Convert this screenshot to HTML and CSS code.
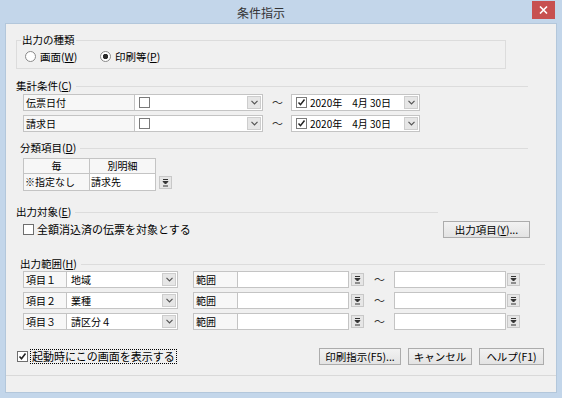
FILE: index.html
```html
<!DOCTYPE html>
<html lang="ja">
<head>
    <meta charset="UTF-8">
    <title>条件指示</title>
    <link rel="stylesheet" href="styles.css">
</head>
<body>
<div class="window">
    <div class="titlebar">
        <div class="title">条件指示</div>
        <div class="close">
            <svg width="9" height="8" viewBox="0 0 9 8"><path d="M1 0.5 L8 7.5 M8 0.5 L1 7.5" stroke="#fff" stroke-width="1.6"/></svg>
        </div>
    </div>

    <div class="client">
        <fieldset class="kind">
            <legend>出力の種類</legend>
            <div class="options">
                <label class="radio first"><span class="dot"></span>画面(<u>W</u>)</label>
                <label class="radio"><span class="dot on"></span>印刷等(<u>P</u>)</label>
            </div>
        </fieldset>

        <!-- 集計条件 -->
        <div class="head head-sum"><span>集計条件(<u>C</u>)</span><span class="rule"></span></div>
        <div class="row cond first">
            <span class="cell w-cond">伝票日付</span>
            <span class="combo w-box">
                <span class="val"><span class="box"></span></span>
                <span class="drop"><svg width="7" height="5" viewBox="0 0 7 5"><path d="M0.5 0.8 L3.5 3.8 L6.5 0.8" fill="none" stroke="#555" stroke-width="1.2"/></svg></span>
            </span>
            <span class="tilde w-tilde">～</span>
            <span class="combo w-box">
                <span class="val"><span class="box"><svg width="9" height="9" viewBox="0 0 9 9"><path d="M1.5 4.5 L3.5 6.7 L7.5 1.5" fill="none" stroke="#222" stroke-width="1.5"/></svg></span>2020年　4月 30日</span>
                <span class="drop"><svg width="7" height="5" viewBox="0 0 7 5"><path d="M0.5 0.8 L3.5 3.8 L6.5 0.8" fill="none" stroke="#555" stroke-width="1.2"/></svg></span>
            </span>
        </div>
        <div class="row cond">
            <span class="cell w-cond">請求日</span>
            <span class="combo w-box">
                <span class="val"><span class="box"></span></span>
                <span class="drop"><svg width="7" height="5" viewBox="0 0 7 5"><path d="M0.5 0.8 L3.5 3.8 L6.5 0.8" fill="none" stroke="#555" stroke-width="1.2"/></svg></span>
            </span>
            <span class="tilde w-tilde">～</span>
            <span class="combo w-box">
                <span class="val"><span class="box"><svg width="9" height="9" viewBox="0 0 9 9"><path d="M1.5 4.5 L3.5 6.7 L7.5 1.5" fill="none" stroke="#222" stroke-width="1.5"/></svg></span>2020年　4月 30日</span>
                <span class="drop"><svg width="7" height="5" viewBox="0 0 7 5"><path d="M0.5 0.8 L3.5 3.8 L6.5 0.8" fill="none" stroke="#555" stroke-width="1.2"/></svg></span>
            </span>
        </div>

        <!-- 分類項目 -->
        <div class="head head-class"><span>分類項目(<u>D</u>)</span><span class="rule"></span></div>
        <div class="class-table">
            <div class="grid">
                <span class="gh">毎</span>
                <span class="gh">別明細</span>
                <span class="gd">※指定なし</span>
                <span class="gd white">請求先</span>
            </div>
            <span class="sbtn"><svg width="7" height="9" viewBox="0 0 7 9"><path d="M1 1.5 H6 M1 3.5 H6 L3.5 6 Z M1 8 H6" fill="#333" stroke="#333" stroke-width="1"/></svg></span>
        </div>

        <!-- 出力対象 -->
        <div class="head head-target"><span>出力対象(<u>E</u>)</span><span class="rule"></span></div>
        <div class="target-row">
            <span class="check"></span>
            <span class="check-text">全額消込済の伝票を対象とする</span>
            <span class="btn w-items">出力項目(<u>Y</u>)...</span>
        </div>

        <!-- 出力範囲 -->
        <div class="head head-range"><span>出力範囲(<u>H</u>)</span><span class="rule"></span></div>
        <div class="row range">
            <span class="cell w-item">項目１</span>
            <span class="combo w-sel">
                <span class="val">地域</span>
                <span class="drop"><svg width="7" height="5" viewBox="0 0 7 5"><path d="M0.5 0.8 L3.5 3.8 L6.5 0.8" fill="none" stroke="#555" stroke-width="1.2"/></svg></span>
            </span>
            <span class="cell w-span">範囲</span>
            <span class="input w-from"></span>
            <span class="sbtn"><svg width="7" height="9" viewBox="0 0 7 9"><path d="M1 1.5 H6 M1 3.5 H6 L3.5 6 Z M1 8 H6" fill="#333" stroke="#333" stroke-width="1"/></svg></span>
            <span class="tilde w-rtilde">～</span>
            <span class="input w-to"></span>
            <span class="sbtn to"><svg width="7" height="9" viewBox="0 0 7 9"><path d="M1 1.5 H6 M1 3.5 H6 L3.5 6 Z M1 8 H6" fill="#333" stroke="#333" stroke-width="1"/></svg></span>
        </div>
        <div class="row range">
            <span class="cell w-item">項目２</span>
            <span class="combo w-sel">
                <span class="val">業種</span>
                <span class="drop"><svg width="7" height="5" viewBox="0 0 7 5"><path d="M0.5 0.8 L3.5 3.8 L6.5 0.8" fill="none" stroke="#555" stroke-width="1.2"/></svg></span>
            </span>
            <span class="cell w-span">範囲</span>
            <span class="input w-from"></span>
            <span class="sbtn"><svg width="7" height="9" viewBox="0 0 7 9"><path d="M1 1.5 H6 M1 3.5 H6 L3.5 6 Z M1 8 H6" fill="#333" stroke="#333" stroke-width="1"/></svg></span>
            <span class="tilde w-rtilde">～</span>
            <span class="input w-to"></span>
            <span class="sbtn to"><svg width="7" height="9" viewBox="0 0 7 9"><path d="M1 1.5 H6 M1 3.5 H6 L3.5 6 Z M1 8 H6" fill="#333" stroke="#333" stroke-width="1"/></svg></span>
        </div>
        <div class="row range">
            <span class="cell w-item">項目３</span>
            <span class="combo w-sel">
                <span class="val">請区分４</span>
                <span class="drop"><svg width="7" height="5" viewBox="0 0 7 5"><path d="M0.5 0.8 L3.5 3.8 L6.5 0.8" fill="none" stroke="#555" stroke-width="1.2"/></svg></span>
            </span>
            <span class="cell w-span">範囲</span>
            <span class="input w-from"></span>
            <span class="sbtn"><svg width="7" height="9" viewBox="0 0 7 9"><path d="M1 1.5 H6 M1 3.5 H6 L3.5 6 Z M1 8 H6" fill="#333" stroke="#333" stroke-width="1"/></svg></span>
            <span class="tilde w-rtilde">～</span>
            <span class="input w-to"></span>
            <span class="sbtn to"><svg width="7" height="9" viewBox="0 0 7 9"><path d="M1 1.5 H6 M1 3.5 H6 L3.5 6 Z M1 8 H6" fill="#333" stroke="#333" stroke-width="1"/></svg></span>
        </div>

        <!-- フッター -->
        <div class="footer">
            <span class="check"><svg width="9" height="9" viewBox="0 0 9 9"><path d="M1.5 4.5 L3.5 6.7 L7.5 1.5" fill="none" stroke="#222" stroke-width="1.6"/></svg></span>
            <span class="check-text focus">起動時にこの画面を表示する</span>
            <span class="btn w-print">印刷指示(F5)...</span>
            <span class="btn w-cancel">キャンセル</span>
            <span class="btn w-help">ヘルプ(F1)</span>
        </div>
        <div class="sep"></div>
    </div>
</div>
</body>
</html>
```

FILE: styles.css
```css
:root {
    --frame-color: #c3d6ea;
    --face-color: #f0f0f0;
    --line-color: #dcdcdc;
    --cell-border: #c4c4c4;
    --text-color: #000000;
}

* {
    box-sizing: border-box;
}

body {
    margin: 0;
    font-family: "Noto Sans CJK JP", "Noto Sans", sans-serif;
    font-size: 10.5px;
    color: var(--text-color);
}

u {
    text-decoration: underline;
    text-underline-offset: 1px;
}

.window {
    width: 562px;
    height: 398px;
    background-color: var(--frame-color);
    display: flex;
    flex-direction: column;
}

.titlebar {
    height: 24px;
    display: flex;
    align-items: flex-start;
    flex-shrink: 0;
}

.title {
    flex: 1;
    text-align: center;
    line-height: 26px;
    font-size: 12px;
    color: #333333;
    padding-right: 10px;
}

.close {
    width: 23px;
    height: 18px;
    margin: 1px 7px 0 0;
    background-color: #c75050;
    display: flex;
    align-items: center;
    justify-content: center;
}

.client {
    flex: 1;
    margin: 0 6px 6px;
    background-color: var(--face-color);
    box-shadow: 0 0 0 1px #b3c7db;
}

/* 出力の種類 */
.kind {
    margin: 9px 0 0 10px;
    width: 490px;
    height: 36px;
    padding: 0 0 0 4px;
    border: 1px solid var(--line-color);
}

.kind legend {
    padding: 0 1px;
    line-height: 14px;
}

.options {
    display: flex;
    align-items: center;
    height: 18px;
}

.radio {
    display: flex;
    align-items: center;
    margin-left: 4px;
}

.radio.first {
    width: 71px;
}

.dot {
    width: 11px;
    height: 11px;
    border-radius: 50%;
    border: 1px solid #8a8a8a;
    background-color: #fff;
    margin-right: 4px;
}

.dot.on {
    background: radial-gradient(circle, #2a2a2a 0 2.4px, #fff 3px);
}

/* 見出し */
.head {
    display: flex;
    align-items: center;
    height: 14px;
    line-height: 14px;
}

.head .rule {
    flex: 1;
    border-top: 1px solid var(--line-color);
    margin-left: 4px;
}

.head-sum {
    margin: 10px 28px 0 10px;
}

.head-class {
    margin: 9px 28px 0 14px;
}

.head-target {
    margin: 14px 118px 0 10px;
}

.head-range {
    margin: 19px 11px 0 14px;
}

/* 行 */
.row {
    display: flex;
    height: 17px;
    margin-top: 4px;
    margin-left: 17px;
}

.row.cond.first {
    margin-top: 1px;
}

.row.range:first-of-type,
.head-range + .row {
    margin-top: 0;
}

.cell {
    border: 1px solid var(--cell-border);
    background-color: #f7f7f7;
    font-size: 10px;
    line-height: 15px;
    padding-left: 2px;
    white-space: nowrap;
}

.combo {
    display: flex;
    border: 1px solid var(--cell-border);
    background-color: #fff;
    margin-left: -1px;
}

.combo .val {
    flex: 1;
    display: flex;
    align-items: center;
    padding-left: 4px;
    font-size: 10px;
    line-height: 15px;
    white-space: nowrap;
}

.drop {
    width: 14px;
    margin: 1px;
    background-color: #e6e6e6;
    border: 1px solid #cdcdcd;
    display: flex;
    align-items: center;
    justify-content: center;
}

.box {
    width: 11px;
    height: 11px;
    border: 1px solid #7a7a7a;
    background-color: #fff;
    display: flex;
    align-items: center;
    justify-content: center;
    margin-right: 3px;
}

.tilde {
    text-align: center;
    font-size: 11px;
    line-height: 17px;
    color: #333;
}

.input {
    border: 1px solid var(--cell-border);
    background-color: #fff;
    margin-left: -1px;
}

.sbtn {
    width: 13px;
    height: 13px;
    align-self: center;
    margin-left: 2px;
    background-color: #e6e6e6;
    border: 1px solid #c8c8c8;
    display: flex;
    align-items: center;
    justify-content: center;
}

.sbtn.to {
    margin-left: 1px;
}

.w-cond { width: 112px; }
.w-box { width: 129px; }
.w-tilde { width: 29px; }
.w-item { width: 44px; }
.w-sel { width: 112px; }
.w-span { width: 45px; margin-left: 15px; }
.w-from { width: 112px; }
.w-rtilde { width: 31px; }
.w-to { width: 112px; }

/* 分類項目 */
.class-table {
    display: flex;
    align-items: flex-end;
    margin: 3px 0 0 17px;
}

.grid {
    display: grid;
    grid-template-columns: 66px 66px;
    border-top: 1px solid var(--cell-border);
    border-left: 1px solid var(--cell-border);
}

.gh,
.gd {
    border-right: 1px solid var(--cell-border);
    border-bottom: 1px solid var(--cell-border);
    font-size: 10px;
    white-space: nowrap;
}

.gh {
    height: 15px;
    line-height: 14px;
    text-align: center;
    background-color: #f7f7f7;
}

.gd {
    height: 17px;
    line-height: 16px;
    padding-left: 1px;
    background-color: #f7f7f7;
}

.gd.white {
    background-color: #fff;
}

.class-table .sbtn {
    align-self: flex-end;
    margin: 0 0 2px 3px;
}

/* 出力対象 */
.target-row {
    display: flex;
    align-items: center;
    height: 17px;
    margin: 2px 26px 0 17px;
}

.check {
    width: 11px;
    height: 11px;
    border: 1px solid #6e6e6e;
    background-color: #fff;
    display: flex;
    align-items: center;
    justify-content: center;
}

.check-text {
    margin-left: 3px;
    font-size: 11px;
    line-height: 13px;
}

.btn {
    height: 17px;
    border: 1px solid #acacac;
    background: linear-gradient(#f2f2f2, #e3e3e3);
    line-height: 15px;
    text-align: center;
    white-space: nowrap;
}

.target-row .btn {
    margin-left: auto;
}

.w-items { width: 87px; }
.w-print { width: 82px; margin-left: auto; }
.w-cancel { width: 64px; margin-left: 7px; }
.w-help { width: 65px; margin-left: 7px; }

/* フッター */
.footer {
    display: flex;
    align-items: center;
    height: 17px;
    margin: 18px 12px 0 11px;
}

.focus {
    margin-left: 2px;
    padding: 0 1px;
    border: 1px dotted #000;
}

.sep {
    margin-top: 10px;
    border-top: 1px solid #d9d9d9;
}
```
